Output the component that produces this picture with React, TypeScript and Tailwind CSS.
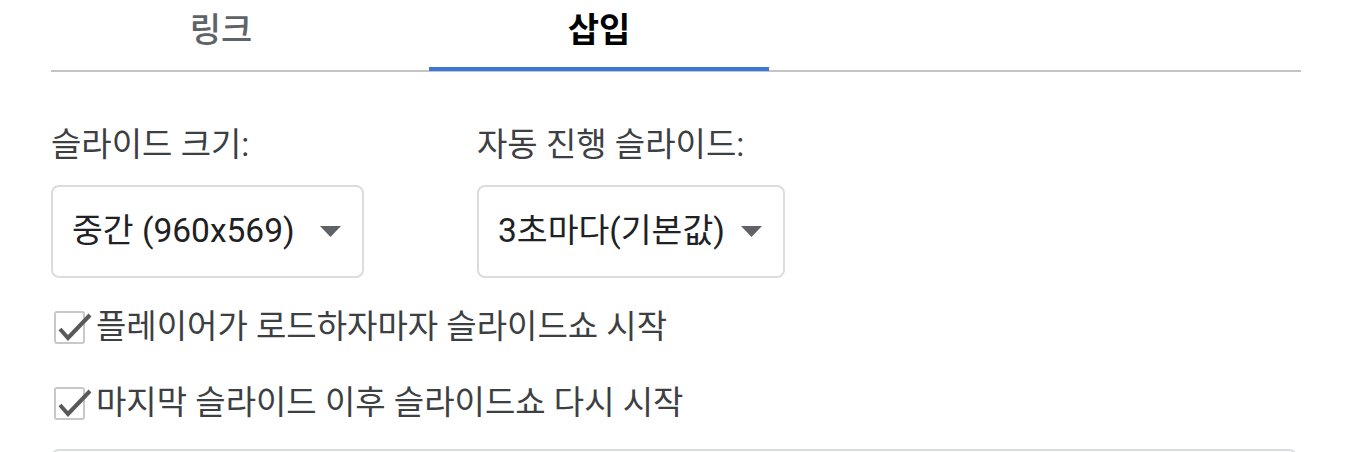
import { useState } from "react";

const font = "font-['Roboto','Noto_Sans_CJK_KR',sans-serif]";

const Dropdown = ({ value, width }: { value: string; width: string }) => (
  <div className={`${width} flex h-[93px] items-center justify-between rounded-[8px] border-2 border-[#dadce0] bg-white pl-[19px] pr-[21px]`}>
    <span className="text-[33.5px] text-[#202124]">{value}</span>
    <svg width="21" height="11" viewBox="0 0 21 11" className="shrink-0">
      <path d="M0 0 H21 L10.5 11 Z" fill="#5f6368" />
    </svg>
  </div>
);

const Check = ({ label }: { label: string }) => (
  <label className="flex h-[76px] items-center">
    <span className="relative ml-[3px] mr-[11px] h-[33px] w-[31px] shrink-0 rounded-[3px] border-2 border-[#c8c8c8] bg-white">
      <svg width="40" height="30" viewBox="0 0 40 30" className="absolute left-[1px] top-[-2px] overflow-visible">
        <path d="M3 18 L11 27 L33 4" fill="none" stroke="#595959" strokeWidth="4" />
      </svg>
    </span>
    <span className="text-[33px] text-[#3c4043]">{label}</span>
  </label>
);

export default function App() {
  const [tab, setTab] = useState(1);
  const tabs = ["링크", "삽입"];

  return (
    <div className={`${font} h-[452px] w-[1360px] overflow-hidden bg-white px-[51px]`}>
      <div className="flex h-[72px] w-[1250px] gap-[38px] border-b-2 border-[#c4c4c4]">
        {tabs.map((t, i) => (
          <button
            key={t}
            onClick={() => setTab(i)}
            className="flex w-[340px] flex-col items-center justify-between"
          >
            <span
              className={`pt-[8px] text-[34px] leading-[44px] ${
                tab === i ? "font-bold text-black" : "font-medium text-[#5f6368]"
              }`}
            >
              {t}
            </span>
            <span className={`h-[4px] w-full translate-y-[1px] ${tab === i ? "bg-[#3c78d8]" : ""}`} />
          </button>
        ))}
      </div>

      <div className="mt-[53px] flex">
        <div className="w-[426px]">
          <div className="text-[33px] leading-[40px] text-[#3c4043]">슬라이드 크기:</div>
          <div className="mt-[20px]">
            <Dropdown value="중간 (960x569)" width="w-[313px]" />
          </div>
        </div>
        <div>
          <div className="text-[33px] leading-[40px] text-[#3c4043]">자동 진행 슬라이드:</div>
          <div className="mt-[20px]">
            <Dropdown value="3초마다(기본값)" width="w-[308px]" />
          </div>
        </div>
      </div>

      <div className="mt-[11px]">
        <Check label="플레이어가 로드하자마자 슬라이드쇼 시작" />
        <Check label="마지막 슬라이드 이후 슬라이드쇼 다시 시작" />
      </div>

      <div className="mt-[8px] h-[60px] w-[1246px] rounded-[8px] border-2 border-[#dadce0]" />
    </div>
  );
}
